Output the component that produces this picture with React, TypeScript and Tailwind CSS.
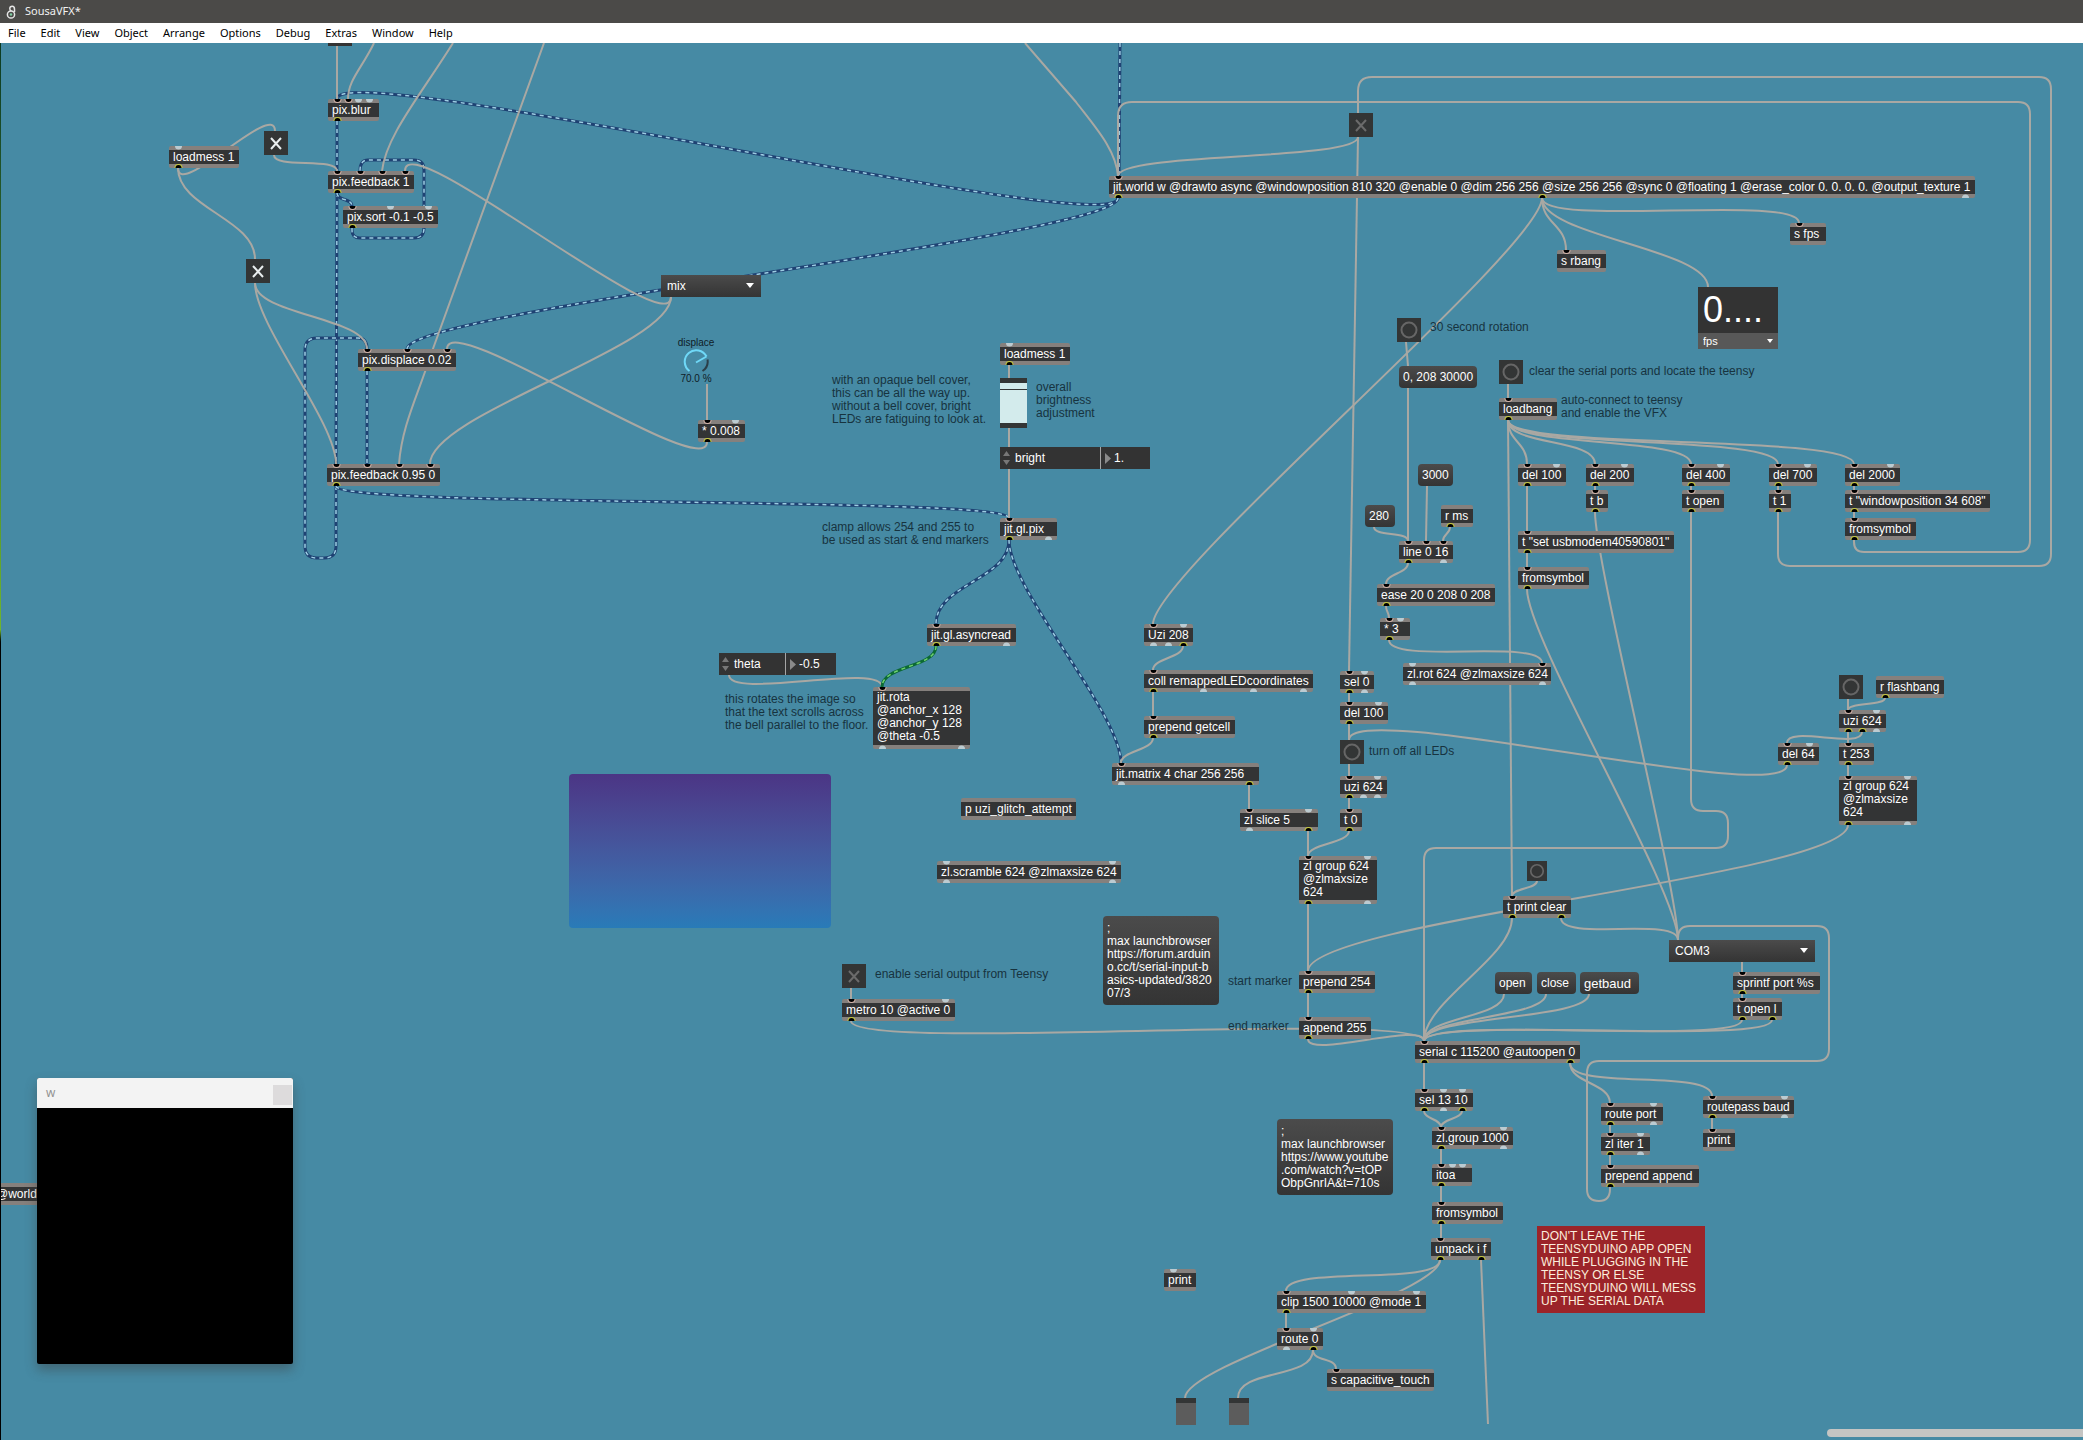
import React, { useState } from "react";
import clsx from "clsx";

/* Patch coordinates start at the window's top edge; the canvas is scrolled by this much. */
const SCROLL_Y = 43;

/* ---------- data ---------- */

type NodeSpec = {
  text: string;
  x: number;
  y: number;
  w: number;
  h?: number;
  /* port offsets from the left edge; a negative offset marks a port with no cord */
  ins?: number[];
  outs?: number[];
};

const NODES: NodeSpec[] = [
  { text: "pix.blur", x: 328, y: 99, w: 51, ins: [9, 20, -30, -41], outs: [9] },
  { text: "loadmess 1", x: 169, y: 146, w: 70, ins: [-9], outs: [9] },
  { text: "pix.feedback 1", x: 328, y: 171, w: 86, ins: [9, 32, 54, 77], outs: [9] },
  { text: "pix.sort -0.1 -0.5", x: 343, y: 206, w: 95, ins: [9, -47, -85], outs: [9] },
  { text: "pix.displace 0.02", x: 358, y: 349, w: 98, ins: [9, 49, 89], outs: [9] },
  { text: "pix.feedback 0.95 0", x: 327, y: 464, w: 113, ins: [9, 40, 72, 103], outs: [9] },
  { text: "* 0.008", x: 698, y: 420, w: 47, ins: [9, -37], outs: [9] },
  { text: "loadmess 1", x: 1000, y: 343, w: 70, ins: [-9], outs: [9] },
  { text: "jit.gl.pix", x: 1000, y: 518, w: 57, ins: [9], outs: [9, -48] },
  { text: "jit.gl.asyncread", x: 927, y: 624, w: 89, ins: [9], outs: [9, -79] },
  { text: "jit.rota\n@anchor_x 128\n@anchor_y 128\n@theta -0.5", x: 873, y: 687, w: 97, h: 62, ins: [9], outs: [-9, -88] },
  { text: "Uzi 208", x: 1144, y: 624, w: 49, ins: [9, -39], outs: [-9, -24, 39] },
  { text: "coll remappedLEDcoordinates", x: 1144, y: 670, w: 169, ins: [9], outs: [9, -59, -109, -159] },
  { text: "prepend getcell", x: 1144, y: 716, w: 91, ins: [9], outs: [9] },
  { text: "jit.matrix 4 char 256 256", x: 1112, y: 763, w: 147, ins: [9], outs: [-9, 137] },
  { text: "zl slice 5", x: 1240, y: 809, w: 78, ins: [9, -68], outs: [-9, 68] },
  { text: "zl group 624\n@zlmaxsize\n624", x: 1299, y: 856, w: 78, h: 48, ins: [9, -68], outs: [9, -68] },
  { text: "sel 0", x: 1340, y: 671, w: 34, ins: [9, -24], outs: [9, -24] },
  { text: "del 100", x: 1340, y: 702, w: 48, ins: [9, -38], outs: [9] },
  { text: "uzi 624", x: 1340, y: 776, w: 47, ins: [9, -37], outs: [9, -23, -37] },
  { text: "t 0", x: 1340, y: 809, w: 22, ins: [9], outs: [9] },
  { text: "r ms", x: 1441, y: 505, w: 32, outs: [9] },
  { text: "line 0 16", x: 1399, y: 541, w: 54, ins: [9, 27, 44], outs: [9, -44] },
  { text: "ease 20 0 208 0 208", x: 1377, y: 584, w: 118, ins: [9], outs: [9] },
  { text: "* 3", x: 1380, y: 618, w: 30, ins: [9, -20], outs: [9] },
  { text: "zl.rot 624 @zlmaxsize 624", x: 1403, y: 663, w: 148, ins: [-9, 139], outs: [-9, -139] },
  { text: "t print clear", x: 1503, y: 896, w: 68, ins: [9], outs: [9, 58] },
  { text: "t b", x: 1586, y: 490, w: 22, ins: [9], outs: [9] },
  { text: "t \"set usbmodem40590801\"", x: 1518, y: 531, w: 156, ins: [9], outs: [9] },
  { text: "fromsymbol", x: 1518, y: 567, w: 71, ins: [9], outs: [9] },
  {
    text: "jit.world w @drawto async @windowposition 810 320 @enable 0 @dim 256 256 @size 256 256 @sync 0 @floating 1 @erase_color 0. 0. 0. 0. @output_texture 1",
    x: 1109, y: 176, w: 866, ins: [9], outs: [9, 433, -856],
  },
  { text: "s rbang", x: 1557, y: 250, w: 49, ins: [9] },
  { text: "s fps", x: 1790, y: 223, w: 36, ins: [9] },
  { text: "loadbang", x: 1499, y: 398, w: 58, ins: [9], outs: [9] },
  { text: "del 100", x: 1518, y: 464, w: 48, ins: [9, -38], outs: [9] },
  { text: "del 200", x: 1586, y: 464, w: 48, ins: [9, -38], outs: [9] },
  { text: "del 400", x: 1682, y: 464, w: 48, ins: [9, -38], outs: [9] },
  { text: "del 700", x: 1769, y: 464, w: 48, ins: [9, -38], outs: [9] },
  { text: "del 2000", x: 1845, y: 464, w: 55, ins: [9, -45], outs: [9] },
  { text: "t open", x: 1682, y: 490, w: 42, ins: [9], outs: [9] },
  { text: "t 1", x: 1769, y: 490, w: 22, ins: [9], outs: [9] },
  { text: "t \"windowposition 34 608\"", x: 1845, y: 490, w: 145, ins: [9], outs: [9] },
  { text: "fromsymbol", x: 1845, y: 518, w: 71, ins: [9], outs: [9] },
  { text: "r flashbang", x: 1876, y: 676, w: 68, outs: [9] },
  { text: "uzi 624", x: 1839, y: 710, w: 47, ins: [9, -37], outs: [9, 23, -37] },
  { text: "del 64", x: 1778, y: 743, w: 41, ins: [9, -31], outs: [9] },
  { text: "t 253", x: 1839, y: 743, w: 35, ins: [9], outs: [9] },
  { text: "zl group 624\n@zlmaxsize\n624", x: 1839, y: 776, w: 78, h: 49, ins: [9, -68], outs: [9, -68] },
  { text: "sprintf port %s", x: 1733, y: 972, w: 87, ins: [9], outs: [9] },
  { text: "t open l", x: 1733, y: 998, w: 49, ins: [9], outs: [9, 39] },
  { text: "prepend 254", x: 1299, y: 971, w: 76, ins: [9], outs: [9] },
  { text: "append 255", x: 1299, y: 1017, w: 72, ins: [9], outs: [9] },
  { text: "serial c 115200 @autoopen 0", x: 1415, y: 1041, w: 165, ins: [9], outs: [9, 155] },
  { text: "sel 13 10", x: 1415, y: 1089, w: 58, ins: [9, -28, -47], outs: [9, -28, 47] },
  { text: "zl.group 1000", x: 1432, y: 1127, w: 81, ins: [9, -71], outs: [9, -71] },
  { text: "itoa", x: 1432, y: 1164, w: 40, ins: [9, -20, -30], outs: [9] },
  { text: "fromsymbol", x: 1432, y: 1202, w: 71, ins: [9], outs: [9] },
  { text: "unpack i f", x: 1431, y: 1238, w: 60, ins: [9], outs: [9, 50] },
  { text: "clip 1500 10000 @mode 1", x: 1277, y: 1291, w: 149, ins: [9, -74, -139], outs: [9] },
  { text: "route 0", x: 1277, y: 1328, w: 46, ins: [9, -36], outs: [-9, 36] },
  { text: "s capacitive_touch", x: 1327, y: 1369, w: 107, ins: [9] },
  { text: "route port", x: 1601, y: 1103, w: 62, ins: [9, -52], outs: [9, -52] },
  { text: "zl iter 1", x: 1601, y: 1133, w: 49, ins: [9, -39], outs: [9, -39] },
  { text: "prepend append", x: 1601, y: 1165, w: 98, ins: [9], outs: [9] },
  { text: "routepass baud", x: 1703, y: 1096, w: 91, ins: [9, -81], outs: [9, -81] },
  { text: "print", x: 1703, y: 1129, w: 32, ins: [9] },
  { text: "print", x: 1164, y: 1269, w: 32, ins: [-9] },
  { text: "p uzi_glitch_attempt", x: 961, y: 798, w: 115 },
  { text: "zl.scramble 624 @zlmaxsize 624", x: 937, y: 861, w: 184, ins: [-9, -175], outs: [-9, -175] },
  { text: "metro 10 @active 0", x: 842, y: 999, w: 113, ins: [9, -103], outs: [9] },
  { text: "@world", x: -8, y: 1183, w: 60 },
];

type MessageSpec = { text: string; x: number; y: number; w: number; h?: number; large?: boolean };

const MESSAGES: MessageSpec[] = [
  { text: "0, 208 30000", x: 1399, y: 366, w: 78 },
  { text: "3000", x: 1418, y: 464, w: 35 },
  { text: "280", x: 1365, y: 505, w: 30 },
  { text: "open", x: 1495, y: 972, w: 37 },
  { text: "close", x: 1537, y: 972, w: 39 },
  { text: "getbaud", x: 1580, y: 972, w: 59, large: true },
  {
    text: ";\nmax launchbrowser\nhttps://forum.arduin\no.cc/t/serial-input-b\nasics-updated/3820\n07/3",
    x: 1103, y: 916, w: 116, h: 89,
  },
  {
    text: ";\nmax launchbrowser\nhttps://www.youtube\n.com/watch?v=tOP\nObpGnrIA&t=710s",
    x: 1277, y: 1119, w: 116, h: 76,
  },
];

type CommentSpec = { text: string; x: number; y: number };

const COMMENTS: CommentSpec[] = [
  { text: "with an opaque bell cover,\nthis can be all the way up.\nwithout a bell cover, bright\nLEDs are fatiguing to look at.", x: 832, y: 374 },
  { text: "clamp allows 254 and 255 to\nbe used as start & end markers", x: 822, y: 521 },
  { text: "this rotates the image so\nthat the text scrolls across\nthe bell parallel to the floor.", x: 725, y: 693 },
  { text: "overall\nbrightness\nadjustment", x: 1036, y: 381 },
  { text: "30 second rotation", x: 1430, y: 321 },
  { text: "clear the serial ports and locate the teensy", x: 1529, y: 365 },
  { text: "auto-connect to teensy\nand enable the VFX", x: 1561, y: 394 },
  { text: "turn off all LEDs", x: 1369, y: 745 },
  { text: "start marker", x: 1228, y: 975 },
  { text: "end marker", x: 1228, y: 1020 },
  { text: "enable serial output from Teensy", x: 875, y: 968 },
];

type ToggleSpec = { name: string; x: number; y: number; on: boolean };

const TOGGLES: ToggleSpec[] = [
  { name: "feedback toggle", x: 264, y: 131, on: true },
  { name: "displace toggle", x: 246, y: 259, on: true },
  { name: "world enable", x: 1349, y: 113, on: false },
  { name: "enable serial output from Teensy", x: 842, y: 964, on: false },
];

type BangSpec = { name: string; x: number; y: number; size: number };

const BANGS: BangSpec[] = [
  { name: "30 second rotation", x: 1397, y: 318, size: 24 },
  { name: "clear the serial ports", x: 1499, y: 360, size: 24 },
  { name: "turn off all LEDs", x: 1340, y: 740, size: 24 },
  { name: "print ports", x: 1527, y: 861, size: 20 },
  { name: "flash", x: 1839, y: 675, size: 24 },
];

/* from x, from y, to x, to y, optional bend */
type Cord = [number, number, number, number, number?];

const CORDS: Cord[] = [
  [178, 168, 255, 259, 40],
  [178, 168, 275, 131, 32],
  [274, 155, 337, 171, 14],
  [255, 283, 367, 349, 32],
  [255, 283, 336, 464, 42],
  [671, 297, 405, 171, 47],
  [671, 297, 430, 464, 50],
  [707, 442, 447, 349, 42],
  [729, 675, 882, 687, 25],
  [1358, 137, 1118, 176, 24],
  [1542, 198, 1566, 250],
  [1542, 198, 1799, 223, 30],
  [1542, 198, 1708, 287, 38],
  [1542, 198, 1153, 624, 50],
  [1374, 527, 1408, 541, 10],
  [1450, 527, 1443, 541],
  [1408, 563, 1386, 584],
  [1386, 606, 1389, 618],
  [1389, 640, 1542, 663, 25],
  [1183, 646, 1153, 670],
  [1153, 738, 1121, 763],
  [1349, 831, 1308, 856],
  [1308, 1039, 1424, 1041, 20],
  [851, 1021, 1424, 1041, 32],
  [1787, 765, 1349, 740, 42],
  [1508, 420, 1527, 464],
  [1508, 420, 1595, 464, 26],
  [1508, 420, 1691, 464, 28],
  [1508, 420, 1778, 464, 30],
  [1508, 420, 1854, 464, 31],
  [1527, 589, 1678, 940, 50],
  [1595, 512, 1678, 940, 50],
  [1537, 881, 1512, 896, 8],
  [1512, 918, 1424, 1041, 40],
  [1561, 918, 1678, 940, 24],
  [1848, 825, 1308, 971, 50],
  [1742, 1020, 1424, 1041, 26],
  [1772, 1020, 1424, 1041, 26],
  [1504, 994, 1424, 1041, 24],
  [1546, 994, 1424, 1041, 24],
  [1589, 994, 1424, 1041, 26],
  [1424, 1111, 1441, 1127],
  [1462, 1111, 1441, 1127],
  [1570, 1063, 1610, 1103],
  [1570, 1063, 1712, 1096, 28],
  [1440, 1260, 1286, 1291, 26],
  [1440, 1260, 1185, 1398, 34],
  [1313, 1350, 1238, 1398, 30],
  [1313, 1350, 1336, 1369, 12],
  [1885, 698, 1848, 710, 8],
  [1862, 732, 1787, 743, 18],
];

/* straight cords and cords that follow hand-placed bends */
const ROUTED = [
  "M337 46V99",
  "M374 43C362 68 348 80 348 99",
  "M453 43C420 96 386 136 382 171",
  "M544 43L430 357C418 395 402 425 399 464",
  "M707 384V420",
  "M1009 365V518",
  "M1025 43L1076 102C1096 128 1116 150 1118 176",
  "M1358 137L1349 671",
  "M1406 342L1408 366V541",
  "M1427 486L1426 541",
  "M1153 692V716",
  "M1249 785V809",
  "M1308 831V856",
  "M1308 904V1017",
  "M1349 693V809",
  "M1508 384V398",
  "M1508 420L1512 896",
  "M1527 486V567",
  "M1595 486V490",
  "M1691 486V490",
  "M1778 486V490",
  "M1854 486V518",
  "M1848 699V776",
  "M1742 962V998",
  "M1424 1063V1089",
  "M1441 1149V1238",
  "M1610 1125V1165",
  "M1712 1118V1129",
  "M1286 1313V1328",
  "M1481 1260L1488 1424",
  "M851 988V999",
  "M1778 512V554Q1778 566 1790 566H2039Q2051 566 2051 554V89Q2051 77 2039 77H1372Q1358 77 1358 91V113",
  "M1854 540V542Q1854 552 1864 552H2018Q2030 552 2030 540V114Q2030 102 2018 102H1132Q1118 102 1118 116V176",
  "M1691 512V799Q1691 811 1703 811H1716Q1728 811 1728 823V836Q1728 848 1716 848H1436Q1424 848 1424 860V1041",
  "M1610 1187V1189Q1610 1201 1599 1201Q1587 1201 1587 1189V1073Q1587 1061 1599 1061H1817Q1829 1061 1829 1049V938Q1829 926 1817 926H1690Q1678 926 1678 938",
];

function bend([x1, y1, x2, y2, k]: Cord): string {
  const reach = k ?? Math.min(50, Math.max(Math.hypot(x2 - x1, y2 - y1) * 0.16, Math.abs(y2 - y1) / 2));
  return `M${x1} ${y1}C${x1} ${y1 + reach} ${x2} ${y2 - reach} ${x2} ${y2}`;
}

const TEXTURE_CORDS = [
  "M1120 43L1119 176",
  bend([1118, 198, 337, 99, 43]),
  bend([1118, 198, 407, 349, 38]),
  "M337 121V171",
  "M337 193L336 464",
  bend([337, 193, 352, 206, 8]),
  "M352 228V230Q352 238 360 238H414Q424 238 424 228V170Q424 160 414 160H368Q360 160 360 171",
  "M336 486V546Q336 558 324 558H317Q305 558 305 546V350Q305 338 317 338H358Q367 338 367 349",
  bend([336, 486, 1009, 518, 22]),
  "M367 371V464",
  bend([1009, 540, 936, 624, 40]),
  bend([1009, 540, 1121, 763, 50]),
];

const MATRIX_CORD = bend([936, 646, 882, 687, 22]);

/* ---------- pieces ---------- */

function at(x: number, y: number, w?: number, h?: number): React.CSSProperties {
  return { left: x, top: y, width: w, height: h };
}

function Port({ x, y, outlet }: { x: number; y: number; outlet?: boolean }) {
  const linked = x > 0;
  const cx = Math.abs(x) + 0.5;
  const sweep = outlet ? 1 : 0;
  const half = (rx: number, ry: number) => `M${cx - rx} ${y}A${rx} ${ry} 0 0 ${sweep} ${cx + rx} ${y}Z`;
  if (!linked) return <path d={half(3.5, 3.5)} fill="#bccbd1" />;
  return (
    <>
      <path d={half(4, 4)} fill={outlet ? "#c5c83c" : "#d3b3a8"} />
      <path d={half(3, 3)} fill="#000000" />
    </>
  );
}

function PatchNode({ text, x, y, w, h = 22, ins = [], outs = [] }: NodeSpec) {
  const multiline = text.includes("\n");
  return (
    <div className="absolute rounded-xs border-y-4 border-[#85807d] bg-[#333435] px-1 text-white" style={at(x, y, w, h)}>
      <p className={clsx("text-xs whitespace-pre", multiline ? "leading-[13px]" : "leading-[14px]")}>{text}</p>
      <svg className="absolute -top-1 left-0" width={w} height={h} aria-hidden="true">
        {ins.map((p) => (
          <Port key={p} x={p} y={0} />
        ))}
        {outs.map((p) => (
          <Port key={p} x={p} y={h} outlet />
        ))}
      </svg>
    </div>
  );
}

function Message({ text, x, y, w, h = 22, large }: MessageSpec) {
  return (
    <button
      type="button"
      className={clsx(
        "absolute flex items-center rounded bg-linear-to-b from-[#4b4b4b] to-[#343434] pl-1 text-left leading-[13px] whitespace-pre text-white",
        large ? "text-[13px]" : "text-xs",
      )}
      style={at(x, y, w, h)}
    >
      {text}
    </button>
  );
}

function Comment({ text, x, y }: CommentSpec) {
  return (
    <p className="absolute text-xs leading-[13px] whitespace-pre text-[#17333f]" style={at(x, y)}>
      {text}
    </p>
  );
}

function Toggle({ name, x, y, on }: ToggleSpec) {
  const [checked, setChecked] = useState(on);
  return (
    <label className="absolute block size-6 bg-[#333535]" style={at(x, y)}>
      <input
        type="checkbox"
        aria-label={name}
        checked={checked}
        onChange={() => setChecked(!checked)}
        className="absolute inset-0 appearance-none"
      />
      <svg viewBox="0 0 24 24" className={clsx("size-6", checked ? "text-[#e9eeef]" : "text-[#6b6b6b]")} aria-hidden="true">
        <path d="M7 7L17 18M17 7L7 18" stroke="currentColor" strokeWidth="2" fill="none" />
      </svg>
    </label>
  );
}

function Bang({ name, x, y, size }: BangSpec) {
  return (
    <button type="button" aria-label={name} className="absolute block bg-[#333535]" style={at(x, y, size, size)}>
      <svg viewBox="0 0 24 24" className="size-full" aria-hidden="true">
        <circle cx="12" cy="12" r="7.5" fill="none" stroke="#666666" strokeWidth="2" />
      </svg>
    </button>
  );
}

function Menu({ name, value, x, y, w }: { name: string; value: string; x: number; y: number; w: number }) {
  return (
    <div className="absolute h-[22px] bg-linear-to-b from-[#4b4b4b] to-[#343434]" style={at(x, y, w)}>
      <select aria-label={name} className="block size-full appearance-none bg-transparent pl-1.5 text-xs leading-[22px] text-white">
        <option>{value}</option>
      </select>
      <svg className="pointer-events-none absolute top-2 right-[7px]" width="8" height="5" viewBox="0 0 8 5" aria-hidden="true">
        <path d="M0 0H8L4 5Z" fill="#ffffff" />
      </svg>
    </div>
  );
}

function Attribute({ name, value, x, y, labelWidth, w }: { name: string; value: string; x: number; y: number; labelWidth: number; w: number }) {
  return (
    <label className="absolute flex h-[22px] items-center bg-[#333333] text-xs text-white" style={at(x, y, w)}>
      <span className="flex h-full items-center border-r border-[#a5a5a5] pl-[3px]" style={{ width: labelWidth }}>
        <svg width="7" height="14" viewBox="0 0 7 14" className="mr-[5px]" aria-hidden="true">
          <path d="M0 5L3.500 0L7 5ZM0 9L3.500 14L7 9Z" fill="#777777" />
        </svg>
        {name}
      </span>
      <svg width="6" height="11" viewBox="0 0 6 11" className="mr-[3px] ml-1 shrink-0" aria-hidden="true">
        <path d="M0 0L6 5.500L0 11Z" fill="#8a8a8a" />
      </svg>
      <input defaultValue={value} className="h-full w-0 grow bg-transparent text-xs text-white outline-none" />
    </label>
  );
}

function Slider({ name, x, y, children, w, h }: { name: string; x: number; y: number; w: number; h: number; children: React.ReactNode }) {
  return (
    <div className="absolute flex flex-col bg-[#333535]" style={at(x, y, w, h)}>
      {children}
      <input type="range" aria-label={name} defaultValue={90} className="absolute inset-0 size-full opacity-0" />
    </div>
  );
}

function Dial() {
  return (
    <label className="absolute flex w-12 flex-col items-center text-[10px] leading-3 text-[#0f2027]" style={at(672, 337)}>
      displace
      <svg width="26" height="24" viewBox="0 0 26 24" aria-hidden="true">
        <path d="M24.500 10.500A11.500 11.500 0 0 1 19.500 22" fill="none" stroke="#2b3f49" strokeWidth="2" />
        <path d="M6.500 22A11.500 11.500 0 1 1 23.500 7.500" fill="none" stroke="#6fd8f7" strokeWidth="2" />
        <path d="M13 13.500L23.500 7.500" stroke="#6fd8f7" strokeWidth="2" />
      </svg>
      <span>70.0 %</span>
      <input type="range" defaultValue={70} className="absolute inset-0 size-full opacity-0" />
    </label>
  );
}

function Cords() {
  return (
    <svg className="absolute top-0 left-0 overflow-visible" width="1" height="1" fill="none" aria-hidden="true">
      {TEXTURE_CORDS.map((d) => (
        <g key={d}>
          <path d={d} stroke="#1f4273" strokeWidth="3" />
          <path d={d} stroke="#9ccde2" strokeWidth="1.500" strokeDasharray="4 4" />
        </g>
      ))}
      <g stroke="#a9a8a3" strokeWidth="2">
        {CORDS.map((c) => (
          <path key={c.join()} d={bend(c)} />
        ))}
        {ROUTED.map((d) => (
          <path key={d} d={d} />
        ))}
      </g>
      <path d={MATRIX_CORD} stroke="#0c6a34" strokeWidth="3" />
      <path d={MATRIX_CORD} stroke="#6fd070" strokeWidth="1.500" strokeDasharray="4 4" />
    </svg>
  );
}

function FpsBox() {
  return (
    <div className="absolute w-20 text-white" style={at(1698, 287)}>
      <output className="block h-[46px] bg-[#333333] pl-[5px] text-4xl leading-[46px]">0....</output>
      <div className="relative h-4 bg-[#585858]">
        <select aria-label="Unit" className="block size-full appearance-none bg-transparent pl-[5px] text-[11px] leading-4">
          <option>fps</option>
        </select>
        <svg className="pointer-events-none absolute top-1.5 right-[5px]" width="6" height="4" viewBox="0 0 6 4" aria-hidden="true">
          <path d="M0 0H6L3 4Z" fill="#ffffff" />
        </svg>
      </div>
    </div>
  );
}

function RenderWindow() {
  return (
    <section className="absolute w-64 overflow-hidden rounded-xs bg-black shadow-[0_6px_12px_rgba(60,60,60,0.45)]" style={at(37, 1078)}>
      <header className="flex h-[30px] items-center justify-between bg-[#f3f3f3] pl-[9px] font-['Open_Sans',sans-serif] text-xs text-[#8f8f8f]">
        <span>w</span>
        <button type="button" aria-label="Close" className="mt-1 mr-px h-5 w-[19px] bg-[#dddbdc]" />
      </header>
      <div className="h-64" />
    </section>
  );
}

const MENUS = ["File", "Edit", "View", "Object", "Arrange", "Options", "Debug", "Extras", "Window", "Help"];

export default function App() {
  return (
    <div className="flex h-screen flex-col overflow-hidden bg-[#468aa4] font-['Liberation_Sans',Arial,sans-serif]">
      <header className="flex h-[23px] shrink-0 items-center gap-2 bg-[#4b4a48] pl-1.5 font-['Noto_Sans',sans-serif] text-[11px] text-[#f2f2f2]">
        <svg width="11" height="14" viewBox="0 0 11 14" fill="none" aria-hidden="true">
          <path d="M8.500 7V4.200C8.500 2 7.600 1.200 6.200 1.200C4.700 1.200 3.800 2.200 3.800 3.700C3.800 5 4.400 5.600 5.400 6" stroke="#e6e6e6" strokeWidth="1.500" />
          <circle cx="5" cy="9.500" r="3.600" stroke="#e6e6e6" strokeWidth="1.500" />
          <circle cx="5" cy="9.500" r="1.200" fill="#7fd0a4" />
        </svg>
        <h1>SousaVFX*</h1>
      </header>
      <nav className="flex h-5 shrink-0 items-center gap-[15px] bg-white pl-2 font-['Noto_Sans',sans-serif] text-[11px] text-black">
        {MENUS.map((m) => (
          <button key={m} type="button">
            {m}
          </button>
        ))}
      </nav>

      <main className="relative grow overflow-hidden">
        <div className="absolute inset-x-0" style={{ top: -SCROLL_Y }}>
          <Cords />
          <div className="absolute bg-[#333333]" style={at(328, 40, 24, 6)} />
          {COMMENTS.map((c) => (
            <Comment key={c.text} {...c} />
          ))}
          {NODES.map((n) => (
            <PatchNode key={`${n.x}-${n.y}`} {...n} />
          ))}
          {MESSAGES.map((m) => (
            <Message key={m.text} {...m} />
          ))}
          {TOGGLES.map((t) => (
            <Toggle key={t.name} {...t} />
          ))}
          {BANGS.map((b) => (
            <Bang key={b.name} {...b} />
          ))}
          <Menu name="Feedback mode" value="mix" x={661} y={275} w={100} />
          <Menu name="Serial port" value="COM3" x={1669} y={940} w={146} />
          <Attribute name="bright" value="1." x={1000} y={447} labelWidth={101} w={150} />
          <Attribute name="theta" value="-0.5" x={719} y={653} labelWidth={67} w={117} />
          <Dial />
          <FpsBox />
          <Slider name="Overall brightness" x={1000} y={378} w={27} h={50}>
            <div className="my-[5px] grow bg-[#d3ebec] pt-1.5">
              <div className="h-px bg-[#333535]" />
            </div>
          </Slider>
          <Slider name="Clip level" x={1176} y={1398} w={20} h={27}>
            <div className="mt-[5px] grow bg-[#5c5c5c]" />
          </Slider>
          <Slider name="Touch level" x={1229} y={1398} w={20} h={27}>
            <div className="mt-[5px] grow bg-[#5c5c5c]" />
          </Slider>
          <div className="absolute rounded bg-linear-to-b from-[#4b3585] to-[#287bb8]" style={at(569, 774, 262, 154)} />
          <p
            className="absolute bg-[#9b2429] px-1 pt-1 text-xs leading-[13px] whitespace-pre text-[#fbeedd]"
            style={at(1537, 1226, 168, 87)}
          >
            {"DON'T LEAVE THE\nTEENSYDUINO APP OPEN\nWHILE PLUGGING IN THE\nTEENSY OR ELSE\nTEENSYDUINO WILL MESS\nUP THE SERIAL DATA"}
          </p>
          <RenderWindow />
        </div>

        <div className="absolute inset-y-0 left-0 w-px bg-linear-to-b from-[#0b3b22] from-0% via-[#6fb52c] via-42% to-black to-43%" />
        <div className="absolute right-0 bottom-[3px] h-2 w-64 rounded-l-full bg-[#c5c5c3]" />
      </main>
    </div>
  );
}
